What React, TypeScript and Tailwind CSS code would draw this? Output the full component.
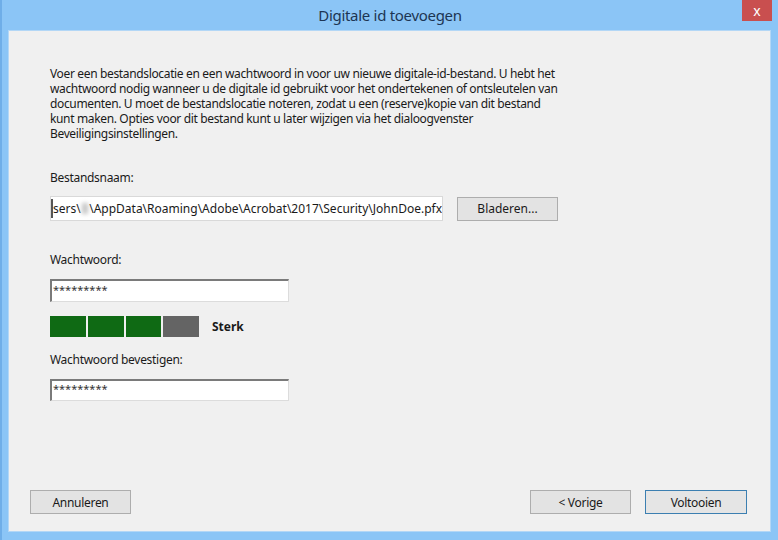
export default function App() {
  const font = { fontFamily: '"Segoe UI", "Noto Sans", "Open Sans", sans-serif' }

  return (
    <div className="w-[778px] h-[540px] bg-[#8bc5f6] border-l-2 border-[#6faee8] flex flex-col" style={font}>
      {/* titelbalk */}
      <div className="relative h-[30px] flex items-center justify-center">
        <span className="text-[15px] text-[#1d3553] tracking-[-0.3px]">Digitale id toevoegen</span>
        <div className="absolute right-[6px] top-0 w-[30px] h-[21px] bg-[#c94f4f] flex items-center justify-center text-white text-[14px] leading-none pt-[1px]">
          x
        </div>
      </div>

      <div className="flex-1 ml-[6px] mr-[7px] mb-[8px] bg-[#f0f0f0] border border-[#b3d7f6] flex flex-col text-[12px] leading-[15px] text-[#1a1a1a]">
        <div className="pl-[41px] pt-[35px]">
          <p className="whitespace-nowrap tracking-[-0.35px]">
            <span className="block">Voer een bestandslocatie en een wachtwoord in voor uw nieuwe digitale-id-bestand. U hebt het</span>
            <span className="block">wachtwoord nodig wanneer u de digitale id gebruikt voor het ondertekenen of ontsleutelen van</span>
            <span className="block">documenten. U moet de bestandslocatie noteren, zodat u een (reserve)kopie van dit bestand</span>
            <span className="block">kunt maken. Opties voor dit bestand kunt u later wijzigen via het dialoogvenster</span>
            <span className="block">Beveiligingsinstellingen.</span>
          </p>

          <div className="mt-[29px] tracking-[-0.3px]">Bestandsnaam:</div>
          <div className="mt-[11px] flex items-center gap-[14px]">
            <div className="w-[393px] h-[25px] bg-white border border-[#d9d9d9] flex items-center overflow-hidden whitespace-nowrap">
              <span className="w-[2px] h-[19px] bg-[#555] shrink-0" />
              <span>sers\</span>
              <span className="inline-block w-[32px] h-[11px] bg-[#c4c4c4] blur-[2px] mx-[1px]" />
              <span>\AppData\Roaming\Adobe\Acrobat\2017\Security\JohnDoe.pfx</span>
            </div>
            <button className="w-[101px] h-[24px] bg-[#e3e3e3] border border-[#adadad] text-[12px]">Bladeren...</button>
          </div>

          <div className="mt-[31px] tracking-[-0.3px]">Wachtwoord:</div>
          <div className="mt-[12px] w-[239px] h-[23px] bg-white border-t-2 border-l-2 border-[#7a7a7a] border-r border-b border-r-[#dcdcdc] border-b-[#dcdcdc] pl-[1px] text-[11px] leading-[17px] text-[#333]">
            *********
          </div>

          <div className="mt-[14px] flex items-center">
            <div className="flex gap-[2px]">
              <div className="w-[36px] h-[21px] bg-[#0f6a14]" />
              <div className="w-[36px] h-[21px] bg-[#0f6a14]" />
              <div className="w-[35px] h-[21px] bg-[#0f6a14]" />
              <div className="w-[36px] h-[21px] bg-[#646464]" />
            </div>
            <span className="ml-[13px] font-bold">Sterk</span>
          </div>

          <div className="mt-[15px] tracking-[-0.3px]">Wachtwoord bevestigen:</div>
          <div className="mt-[12px] w-[239px] h-[22px] bg-white border-t-2 border-l-2 border-[#7a7a7a] border-r border-b border-r-[#dcdcdc] border-b-[#dcdcdc] pl-[1px] text-[11px] leading-[16px] text-[#333]">
            *********
          </div>
        </div>

        <div className="flex-1" />

        <div className="pl-[21px] pr-[23px] pb-[17px] flex items-center">
          <button className="w-[101px] h-[24px] bg-[#e3e3e3] border border-[#adadad] text-[12px] tracking-[-0.3px]">Annuleren</button>
          <div className="flex-1" />
          <button className="w-[101px] h-[24px] bg-[#e3e3e3] border border-[#adadad] text-[12px] tracking-[-0.3px]">&lt; Vorige</button>
          <button className="ml-[14px] w-[102px] h-[24px] bg-[#e5e5e5] border border-[#3c7fb1] text-[12px] tracking-[-0.3px]">Voltooien</button>
        </div>
      </div>
    </div>
  )
}
